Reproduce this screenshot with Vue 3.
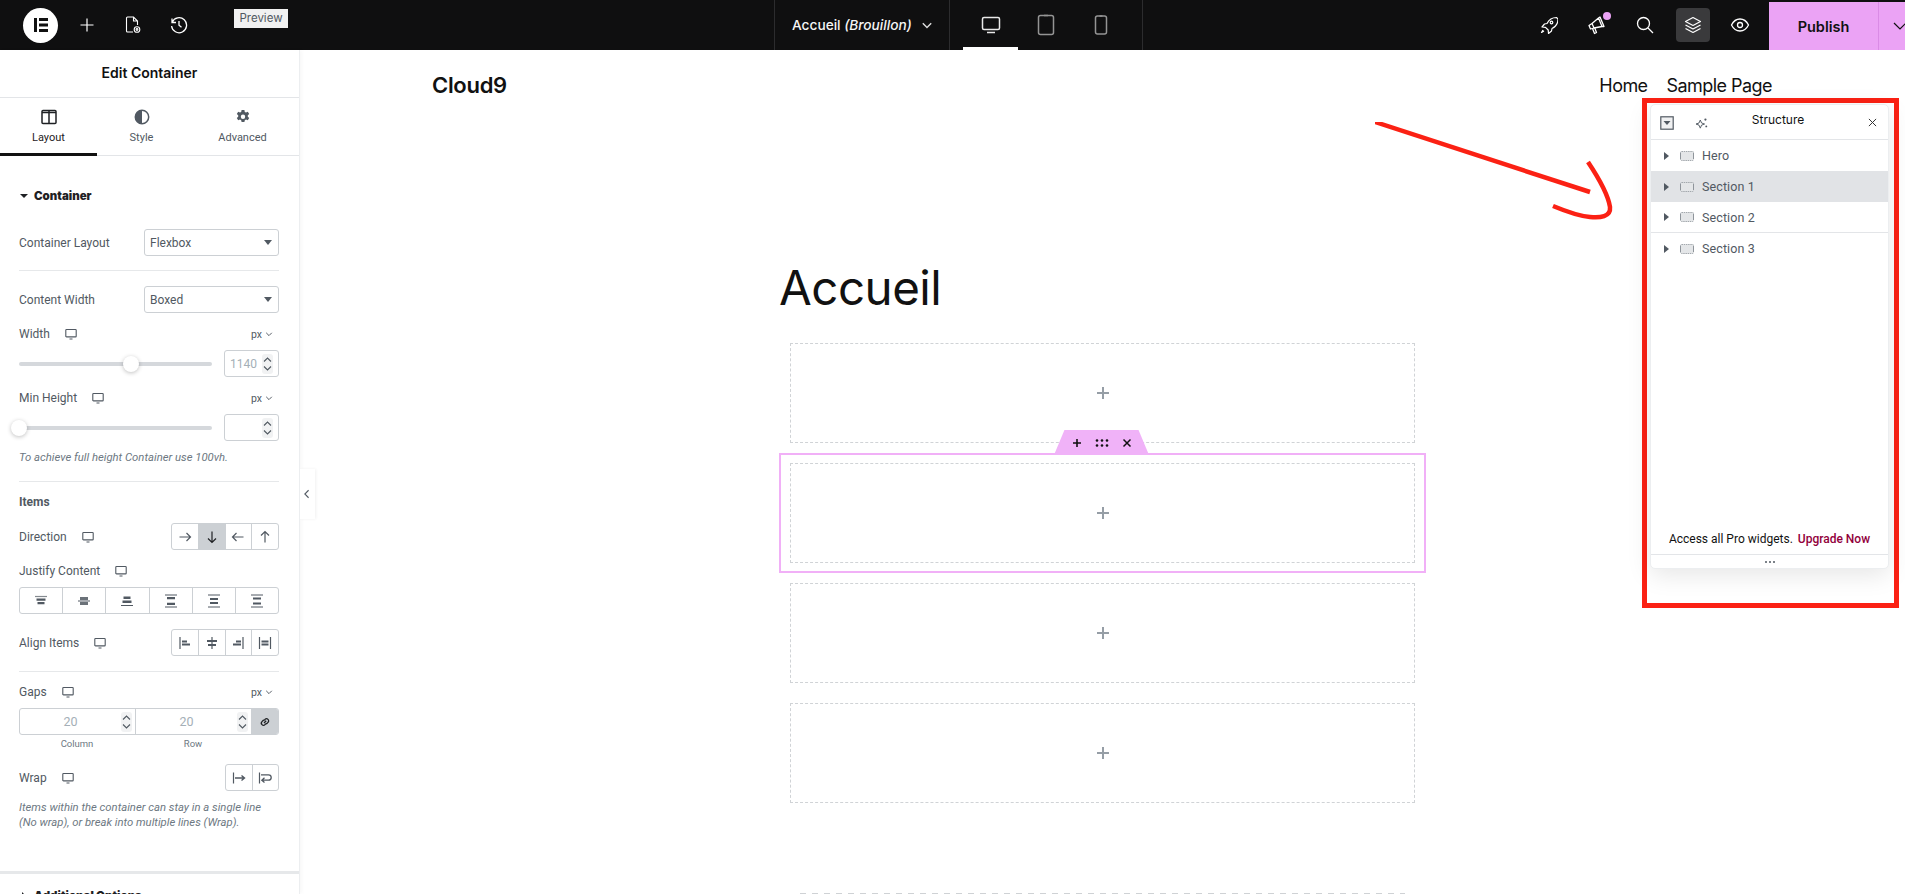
<script setup>
const directions = ['arrow-right', 'arrow-down', 'arrow-left', 'arrow-up']
const justify = ['j1', 'j2', 'j3', 'j4', 'j5', 'j6']
const aligns = ['a1', 'a2', 'a3', 'a4']
const wraps = ['w1', 'w2']
const tree = ['Hero', 'Section 1', 'Section 2', 'Section 3']
const blocks = [0, 1, 2, 3]
</script>

<template>
  <div class="app">
    <svg class="defs" width="0" height="0" aria-hidden="true">
      <symbol id="monitor" viewBox="0 0 12 12"><path d="M1.5 1.5h9a.7.7 0 0 1 .7.7v6a.7.7 0 0 1-.7.7h-9a.7.7 0 0 1-.7-.7v-6a.7.7 0 0 1 .7-.7zM4.5 11h3" fill="none" stroke="currentColor" stroke-width="1.1"/></symbol>
      <symbol id="chev" viewBox="0 0 10 10"><path d="M1.5 3.5 5 7l3.5-3.5" fill="none" stroke="currentColor" stroke-width="1.2"/></symbol>
      <symbol id="spin" viewBox="0 0 11 20"><path d="M2 7.5 5.5 4 9 7.5M2 12.5 5.5 16 9 12.5" fill="none" stroke="currentColor" stroke-width="1.1"/></symbol>
      <symbol id="arrow-right" viewBox="0 0 14 14"><path d="M1.5 7h11M8.5 3l4 4-4 4" fill="none" stroke="currentColor" stroke-width="1.2"/></symbol>
      <symbol id="arrow-down" viewBox="0 0 14 14"><path d="M7 1.5v11M3 8.5l4 4 4-4" fill="none" stroke="currentColor" stroke-width="1.2"/></symbol>
      <symbol id="arrow-left" viewBox="0 0 14 14"><path d="M12.5 7h-11M5.5 3l-4 4 4 4" fill="none" stroke="currentColor" stroke-width="1.2"/></symbol>
      <symbol id="arrow-up" viewBox="0 0 14 14"><path d="M7 12.5v-11M3 5.5l4-4 4 4" fill="none" stroke="currentColor" stroke-width="1.2"/></symbol>
      <symbol id="j1" viewBox="0 0 14 14"><path d="M1 2.5h12" stroke="currentColor" stroke-width="1.2" opacity=".7"/><path d="M2.5 4.5h9v2.3h-9zM3.500 8h7v2.300h-7z" fill="currentColor"/></symbol>
      <symbol id="j2" viewBox="0 0 14 14"><path d="M1 7h12" stroke="currentColor" stroke-width="1"/><path d="M3 3h8v3H3zM3 8h8v3H3z" fill="currentColor" opacity=".85"/></symbol>
      <symbol id="j3" viewBox="0 0 14 14"><path d="M1 11.500h12" stroke="currentColor" stroke-width="1.2"/><path d="M3.500 2.500h7v2.500h-7zM2.500 6.500h9V9h-9z" fill="currentColor"/></symbol>
      <symbol id="j4" viewBox="0 0 14 14"><path d="M1 1h12M1 13h12" stroke="currentColor" stroke-width="1.1"/><path d="M3 3h8v2.300H3zM3 8.700h8V11H3z" fill="currentColor"/></symbol>
      <symbol id="j5" viewBox="0 0 14 14"><path d="M1 1h12M1 13h12" stroke="currentColor" stroke-width="1"/><path d="M3 4h8v2H3zM3 8h8v2H3z" fill="currentColor"/></symbol>
      <symbol id="j6" viewBox="0 0 14 14"><path d="M1 1h12M1 13h12" stroke="currentColor" stroke-width="1"/><path d="M3 3.500h8v2H3zM3 8.500h8v2H3z" fill="currentColor"/></symbol>
      <symbol id="a1" viewBox="0 0 14 14"><path d="M2 1v12" stroke="currentColor" stroke-width="1.2"/><path d="M4 4.500h5v2H4zM4 7.500h8v2H4z" fill="currentColor"/></symbol>
      <symbol id="a2" viewBox="0 0 14 14"><path d="M7 1v12" stroke="currentColor" stroke-width="1.2"/><path d="M2 4h10v2H2zM3 8h8v2H3z" fill="currentColor"/></symbol>
      <symbol id="a3" viewBox="0 0 14 14"><path d="M12 1v12" stroke="currentColor" stroke-width="1.2"/><path d="M5 4.500h5v2H5zM2 7.500h8v2H2z" fill="currentColor"/></symbol>
      <symbol id="a4" viewBox="0 0 14 14"><path d="M1.500 1v12M12.500 1v12" stroke="currentColor" stroke-width="1.2"/><path d="M3.500 4.500h7v2h-7zM3.500 7.500h7v2h-7z" fill="currentColor"/></symbol>
      <symbol id="w1" viewBox="0 0 14 14"><path d="M1.500 1.500v11" stroke="currentColor" stroke-width="1.2"/><path d="M3 7h9M9.500 4.500 12.500 7l-3 2.500" fill="none" stroke="currentColor" stroke-width="1.4"/></symbol>
      <symbol id="w2" viewBox="0 0 14 14"><path d="M1.500 1.500v11" stroke="currentColor" stroke-width="1.2"/><path d="M3 3.800h7.500a2.600 2.600 0 0 1 0 5.400H4M6.500 6.800 3.800 9.200l2.700 2.400" fill="none" stroke="currentColor" stroke-width="1.3"/></symbol>
      <symbol id="section" viewBox="0 0 14 10"><rect x="0.500" y="0.500" width="13" height="9" rx="1" fill="#e4e6e8" stroke="#a3a8ad" stroke-dasharray="1.5 .7"/><path d="M.5 2v6M13.500 2v6" stroke="#8f959b" stroke-width="1"/></symbol>
      <symbol id="plus" viewBox="0 0 14 14"><path d="M7 1v12M1 7h12" fill="none" stroke="currentColor" stroke-width="2"/></symbol>
    </svg>

    <header class="topbar">
      <div class="left-tools">
        <span class="logo">
          <svg viewBox="0 0 20 20" width="20" height="20"><path d="M3 3h3v14H3zM8 3h9v3H8zM8 8.500h9v3H8zM8 14h9v3H8z" fill="#111"/></svg>
        </span>
        <button class="tool">
          <svg viewBox="0 0 16 16" width="16" height="16"><path d="M8 1.500v13M1.500 8h13" fill="none" stroke="#fff" stroke-width="1.2"/></svg>
        </button>
        <button class="tool">
          <svg viewBox="0 0 18 18" width="18" height="18" fill="none" stroke="#fff" stroke-width="1.1"><path d="M9 16H3.500a1 1 0 0 1-1-1V2a1 1 0 0 1 1-1h6l4 4v4M9.500 1v4h4"/><circle cx="13" cy="13.500" r="2.800"/><circle cx="13" cy="13.500" r=".9"/></svg>
        </button>
        <button class="tool">
          <svg viewBox="0 0 18 18" width="18" height="18" fill="none" stroke="#fff" stroke-width="1.3"><path d="M2.200 6.200A7.500 7.500 0 1 1 1.600 10M2 2.500v4h4"/><path d="M9 5v4.300l2.500 2"/></svg>
        </button>
      </div>

      <div class="doc-title">
        <span>Accueil <em>(Brouillon)</em></span>
        <svg class="doc-chev"><use href="#chev"/></svg>
      </div>

      <div class="devices">
        <button class="device active">
          <svg viewBox="0 0 20 20" width="20" height="20" fill="none" stroke="#e8e8e8" stroke-width="1.5"><rect x="1.500" y="2.500" width="17" height="12" rx="1.500"/><path d="M6 17.500h8"/></svg>
        </button>
        <button class="device">
          <svg viewBox="0 0 18 22" width="18" height="22" fill="none" stroke="#949494" stroke-width="1.5"><rect x="1.500" y="1.500" width="15" height="19" rx="2"/><path d="M7 1.500h4"/></svg>
        </button>
        <button class="device">
          <svg viewBox="0 0 14 20" width="14" height="20" fill="none" stroke="#949494" stroke-width="1.5"><rect x="1.500" y="1" width="11" height="18" rx="2"/><path d="M5.500 1h3"/></svg>
        </button>
      </div>

      <div class="right-tools">
        <button class="tool r">
          <svg viewBox="0 0 18 18" width="18" height="18" fill="none" stroke="#fff" stroke-width="1.2" stroke-linejoin="round"><path d="M16.500 1.500c-4 0-7.500 2-9.500 6l-2.500.5-2.500 3 3.500.3 2.700 2.700.3 3.500 3-2.500.5-2.500c4-2 6-5.500 6-9.500z"/><circle cx="11.500" cy="6.500" r="1.300"/><path d="M3 14l-1.500 2.500L4 15"/></svg>
        </button>
        <button class="tool r mega">
          <svg viewBox="0 0 20 20" width="20" height="20" fill="none" stroke="#fff" stroke-width="1.3" stroke-linejoin="round"><path d="M5 8.500 11.500 3l3.500 8.500-8 1.500zM5 8.500 2 10.500l1.500 3.500 3.500-1zM11.500 3l1.500-1 4 9.500-2 0M5.500 13.500l2 5 2-1-1.800-4.500"/></svg>
          <i class="dot"></i>
        </button>
        <button class="tool r">
          <svg viewBox="0 0 18 18" width="18" height="18" fill="none" stroke="#fff" stroke-width="1.3"><circle cx="7.500" cy="7.500" r="6"/><path d="m12 12 5 5"/></svg>
        </button>
        <button class="tool r2">
          <span class="layers">
            <svg viewBox="0 0 18 18" width="18" height="18" fill="none" stroke="#fff" stroke-width="1.2" stroke-linejoin="round"><path d="M9 1.500 16.500 5.500 9 9.500 1.500 5.500zM1.500 9 9 13l7.500-4M1.500 12.500 9 16.500l7.500-4"/></svg>
          </span>
        </button>
        <button class="tool r2">
          <svg viewBox="0 0 20 16" width="20" height="16" fill="none" stroke="#fff" stroke-width="1.3"><path d="M1.500 8C3.500 4 6.500 2 10 2s6.500 2 8.500 6c-2 4-5 6-8.500 6S3.500 12 1.500 8z"/><circle cx="10" cy="8" r="2.500"/></svg>
        </button>
        <div class="publish">
          <span class="publish-main">Publish</span>
          <span class="publish-more"><svg viewBox="0 0 14 14" width="14" height="14"><path d="M1 4l6 6 6-6" fill="none" stroke="#111" stroke-width="1.2"/></svg></span>
        </div>
      </div>
      <span class="tooltip">Preview</span>
    </header>

    <div class="main">
      <aside class="panel">
        <h1 class="panel-title">Edit Container</h1>
        <nav class="tabs">
          <div class="tab active">
            <svg viewBox="0 0 16 16" width="16" height="16" fill="none" stroke="#1f2124" stroke-width="1.5"><rect x="1" y="1.500" width="14" height="13" rx="1"/><path d="M8 2v12M1 3.500h14" /></svg>
            <span>Layout</span>
          </div>
          <div class="tab">
            <svg viewBox="0 0 16 16" width="16" height="16"><circle cx="8" cy="8" r="6.700" fill="none" stroke="#515962" stroke-width="1.5"/><path d="M8 1.300a6.700 6.700 0 0 0 0 13.400z" fill="#515962"/></svg>
            <span>Style</span>
          </div>
          <div class="tab">
            <svg viewBox="0 0 16 16" width="16" height="16"><path fill-rule="evenodd" d="M6.600 1h2.800l.4 1.900 1.200.6 1.800-.8 1.400 2.300-1.400 1.300v1.400l1.400 1.300-1.400 2.300-1.800-.8-1.200.7-.4 1.800H6.600l-.4-1.800-1.200-.7-1.800.8-1.400-2.300 1.400-1.300V6.300L1.800 5l1.400-2.300 1.800.8 1.200-.6zM8 5.500a2.200 2.200 0 1 0 0 4.400 2.200 2.200 0 0 0 0-4.400z" fill="#515962"/></svg>
            <span>Advanced</span>
          </div>
        </nav>

        <div class="panel-body">
          <div class="sec-head m30">
            <i class="caret"></i><strong>Container</strong>
          </div>

          <div class="ctl m23">
            <span class="lab">Container Layout</span>
            <div class="select"><span>Flexbox</span><i class="caret grey"></i></div>
          </div>
          <hr class="rule m14" />
          <div class="ctl m15">
            <span class="lab">Content Width</span>
            <div class="select"><span>Boxed</span><i class="caret grey"></i></div>
          </div>

          <div class="lab-row m13">
            <span class="lab">Width</span>
            <svg class="mon"><use href="#monitor"/></svg>
            <span class="unit">px<svg class="unit-chev"><use href="#chev"/></svg></span>
          </div>
          <div class="slider-row m8">
            <div class="track"><i class="thumb thumb-mid"></i></div>
            <div class="num"><span class="num-val">1140</span><svg class="spin"><use href="#spin"/></svg></div>
          </div>

          <div class="lab-row m13">
            <span class="lab">Min Height</span>
            <svg class="mon"><use href="#monitor"/></svg>
            <span class="unit">px<svg class="unit-chev"><use href="#chev"/></svg></span>
          </div>
          <div class="slider-row m8">
            <div class="track"><i class="thumb thumb-start"></i></div>
            <div class="num"><span class="num-val"></span><svg class="spin"><use href="#spin"/></svg></div>
          </div>

          <p class="hint m9">To achieve full height Container use 100vh.</p>
          <hr class="rule m16" />
          <div class="sub-head m12">Items</div>

          <div class="ctl m13">
            <div class="lab-wrap"><span class="lab">Direction</span><svg class="mon"><use href="#monitor"/></svg></div>
            <div class="group w108">
              <span v-for="d in directions" :key="d" class="cell" :class="{ on: d === 'arrow-down' }"><svg class="ico"><use :href="'#' + d"/></svg></span>
            </div>
          </div>

          <div class="lab-row m13">
            <span class="lab">Justify Content</span>
            <svg class="mon"><use href="#monitor"/></svg>
          </div>
          <div class="group wfull m8">
            <span v-for="j in justify" :key="j" class="cell"><svg class="ico"><use :href="'#' + j"/></svg></span>
          </div>

          <div class="ctl m15">
            <div class="lab-wrap"><span class="lab">Align Items</span><svg class="mon"><use href="#monitor"/></svg></div>
            <div class="group w108">
              <span v-for="a in aligns" :key="a" class="cell"><svg class="ico"><use :href="'#' + a"/></svg></span>
            </div>
          </div>
          <hr class="rule m15" />

          <div class="lab-row m12">
            <span class="lab">Gaps</span>
            <svg class="mon"><use href="#monitor"/></svg>
            <span class="unit">px<svg class="unit-chev"><use href="#chev"/></svg></span>
          </div>
          <div class="gaps m8">
            <div class="gap-cell"><span class="gap-val">20</span><svg class="spin"><use href="#spin"/></svg></div>
            <div class="gap-cell"><span class="gap-val">20</span><svg class="spin"><use href="#spin"/></svg></div>
            <div class="gap-link">
              <svg viewBox="0 0 12 12" width="12" height="12" fill="none" stroke="#1f2124" stroke-width="1.3"><path d="M5 7 7.200 4.800M4.600 4 3 5.600a2 2 0 0 0 3 3L7.400 7.500M7.400 8 9 6.400a2 2 0 0 0-3-3L4.600 4.500"/></svg>
            </div>
          </div>
          <div class="gap-labels m2"><span>Column</span><span>Row</span></div>

          <div class="ctl m13">
            <div class="lab-wrap"><span class="lab">Wrap</span><svg class="mon"><use href="#monitor"/></svg></div>
            <div class="group w54">
              <span v-for="w in wraps" :key="w" class="cell"><svg class="ico"><use :href="'#' + w"/></svg></span>
            </div>
          </div>
          <p class="hint m9">Items within the container can stay in a single line<br />(No wrap), or break into multiple lines (Wrap).</p>
        </div>

        <div class="thick-rule"></div>
        <div class="sec-head m12">
          <i class="caret side"></i><strong>Additional Options</strong>
        </div>
      </aside>

      <main class="canvas">
        <button class="collapse">
          <svg viewBox="0 0 8 12" width="7" height="10"><path d="M6.500 1.500 2 6l4.500 4.500" fill="none" stroke="#515962" stroke-width="1.3"/></svg>
        </button>

        <div class="site-head">
          <span class="site-logo">Cloud9</span>
          <nav class="site-nav"><a>Home</a><a>Sample Page</a></nav>
        </div>

        <div class="page">
          <h2 class="page-title">Accueil</h2>
          <section v-for="b in blocks" :key="b" class="sect" :class="{ selected: b === 1 }">
            <div v-if="b === 1" class="handle">
              <svg viewBox="0 0 10 10" width="10" height="10"><path d="M5 1v8M1 5h8" stroke="#111" stroke-width="1.6"/></svg>
              <svg viewBox="0 0 14 10" width="14" height="10" fill="#111"><circle cx="2" cy="2.500" r="1.300"/><circle cx="7" cy="2.500" r="1.300"/><circle cx="12" cy="2.500" r="1.300"/><circle cx="2" cy="7.500" r="1.300"/><circle cx="7" cy="7.500" r="1.300"/><circle cx="12" cy="7.500" r="1.300"/></svg>
              <svg viewBox="0 0 10 10" width="10" height="10"><path d="m1.500 1.500 7 7M8.500 1.500l-7 7" stroke="#111" stroke-width="1.5"/></svg>
            </div>
            <div class="drop"><svg class="drop-plus"><use href="#plus"/></svg></div>
          </section>
          <div class="next-dash"></div>
        </div>

        <svg class="scribble" width="260" height="110" viewBox="0 0 260 110" fill="none" stroke="#fb2114" stroke-width="4.5">
          <path d="M0 0 215 70"/>
          <path d="M213 40C225 58 233 72 235 85C236 95 225 96 215 95C203 94 190 89 178 84"/>
        </svg>

        <div class="red-box"></div>

        <div class="structure">
          <div class="st-head">
            <svg class="st-ic" viewBox="0 0 14 14" width="14" height="14"><rect x=".8" y=".8" width="12.400" height="12.400" fill="#f0f1f2" stroke="#515962" stroke-width="1.2"/><path d="M3.500 5h7L7 9z" fill="#515962"/></svg>
            <svg class="st-ai" viewBox="0 0 14 14" width="12" height="12" fill="#515962"><path d="M5 3.500 6.500 7 10 8.200 6.500 9.500 5 13 3.500 9.500 0 8.200 3.500 7z" fill="none" stroke="#515962" stroke-width="1.1"/><circle cx="11" cy="3" r="1.300"/><circle cx="12" cy="11" r="1.100"/></svg>
            <span class="st-title">Structure</span>
            <svg class="st-close" viewBox="0 0 10 10" width="9" height="9"><path d="m1 1 8 8M9 1 1 9" stroke="#333" stroke-width="1.1"/></svg>
          </div>
          <div v-for="(t, i) in tree" :key="t" class="st-row" :class="{ hot: i === 1, lined: i === 2 }">
            <i class="st-caret"></i>
            <svg class="st-sec"><use href="#section"/></svg>
            <span>{{ t }}</span>
          </div>
          <div class="st-spacer"></div>
          <div class="st-promo">Access all Pro widgets. <b>Upgrade Now</b></div>
          <div class="st-foot"><i></i><i></i><i></i></div>
        </div>
      </main>
    </div>
  </div>
</template>

<style>
html, body { margin: 0; background: #fff; }
</style>

<style scoped>
.app { position: relative; width: 1905px; height: 894px; overflow: hidden; display: flex; flex-direction: column; font-family: Roboto, "Liberation Sans", sans-serif; color: #515962; }
.defs { position: absolute; }
button { background: none; border: 0; padding: 0; display: flex; align-items: center; justify-content: center; color: inherit; }

.topbar { position: relative; flex: 0 0 50px; height: 50px; background: #0f0f10; display: flex; align-items: stretch; color: #fff; }
.left-tools { display: flex; align-items: center; padding-left: 23px; width: 751px; flex: none; }
.logo { width: 35px; height: 35px; border-radius: 50%; background: #fff; display: flex; align-items: center; justify-content: center; margin-right: 6px; }
.tool { width: 46px; height: 50px; flex: none; }
.tooltip { position: absolute; left: 234px; top: 9px; width: 54px; height: 19px; background: #f1f1f1; color: #515962; font: 400 11.5px/19px Inter, sans-serif; text-align: center; }
.doc-title { width: 175px; flex: none; display: flex; align-items: center; padding-left: 17px; box-sizing: border-box; border-left: 1px solid #2c2c2e; font: 500 13.7px Inter, sans-serif; color: #f5f5f5; white-space: nowrap; }
.doc-title em { font-style: italic; }
.doc-chev { width: 12px; height: 12px; margin-left: 9px; color: #ddd; }
.devices { display: flex; flex: none; padding: 0 13px; width: 194px; box-sizing: border-box; border-left: 1px solid #2c2c2e; border-right: 1px solid #2c2c2e; }
.device { width: 56px; height: 50px; position: relative; }
.device.active::after { content: ""; position: absolute; left: 0; right: 0; bottom: 0; height: 3px; background: #fff; }
.right-tools { margin-left: auto; display: flex; align-items: center; flex: none; width: 395px; margin-right: -15px; }
.tool.r { width: 48px; }
.tool.r2 { width: 47px; }
.mega { position: relative; }
.dot { position: absolute; left: 30px; top: 12px; width: 8px; height: 8px; border-radius: 50%; background: #eba3f5; }
.layers { width: 34px; height: 34px; border-radius: 4px; background: #3a3a3c; display: flex; align-items: center; justify-content: center; }
.publish { margin-left: 6px; align-self: flex-end; height: 48px; width: 151px; flex: none; display: flex; background: #eba3f5; color: #111; font: 600 14.5px Inter, sans-serif; }
.publish-main { width: 109px; display: flex; align-items: center; justify-content: center; border-right: 1px solid #da8be6; }
.publish-more { flex: 1; display: flex; align-items: center; padding-left: 14px; }

.main { flex: 1; display: flex; min-height: 0; }
.panel { width: 300px; flex: none; box-sizing: border-box; border-right: 1px solid #eceef0; box-shadow: 2px 0 4px rgba(0, 0, 0, .03); overflow: hidden; background: #fff; font-size: 12px; position: relative; z-index: 1; }
.panel-title { margin: 0; height: 48px; box-sizing: border-box; text-align: center; font: 600 14px/45px Inter, sans-serif; color: #111; border-bottom: 1px solid #e3e5e8; }
.tabs { display: flex; height: 58px; border-bottom: 1px solid #e3e5e8; box-sizing: border-box; }
.tab { position: relative; width: 97px; flex: none; display: flex; flex-direction: column; align-items: center; padding-top: 11px; gap: 6px; font-size: 11px; line-height: 14px; box-sizing: border-box; color: #515962; }
.tab:nth-child(2) { width: 89px; }
.tab:nth-child(3) { width: 113px; }
.tab.active { color: #1f2124; }
.tab.active::after { content: ""; position: absolute; left: 0; right: 0; bottom: -1px; height: 3px; background: #111; }
.panel-body { padding: 0 20px 0 19px; }

.m2 { margin-top: 2px; } .m8 { margin-top: 8px; } .m9 { margin-top: 9px; } .m10 { margin-top: 10px; }
.m12 { margin-top: 12px; } .m13 { margin-top: 13px; } .m14 { margin-top: 14px; } .m15 { margin-top: 15px; }
.m16 { margin-top: 16px; } .m23 { margin-top: 23px; } .m30 { margin-top: 30px; }

.sec-head { display: flex; align-items: center; height: 20px; gap: 6px; padding-left: 1px; color: #1f2124; font: 700 11.5px Inter, Roboto, sans-serif; }
.panel > .sec-head { padding-left: 20px; }
.caret { width: 0; height: 0; border-left: 4px solid transparent; border-right: 4px solid transparent; border-top: 4px solid #1f2124; }
.caret.side { transform: rotate(-90deg); }
.caret.grey { border-top-color: #515962; border-left-width: 4.5px; border-right-width: 4.5px; border-top-width: 5px; }
.ctl { height: 27px; display: flex; align-items: center; justify-content: space-between; }
.lab { color: #515962; font-size: 12px; white-space: nowrap; }
.lab-wrap { display: flex; align-items: center; }
.select { width: 135px; height: 27px; box-sizing: border-box; border: 1px solid #ccd0d4; border-radius: 3px; padding: 0 6px 0 5px; display: flex; align-items: center; justify-content: space-between; color: #515962; }
.rule { border: 0; height: 1px; background: #e6e8ea; margin-bottom: 0; margin-left: 0; margin-right: 0; }
.lab-row { height: 16px; display: flex; align-items: center; }
.mon { width: 12px; height: 12px; margin-left: 15px; color: #515962; flex: none; }
.unit { margin-left: auto; margin-right: 6px; display: flex; align-items: center; font-size: 10.5px; color: #515962; }
.unit-chev { width: 8px; height: 8px; margin-left: 3px; color: #515962; }
.slider-row { height: 27px; display: flex; align-items: center; justify-content: space-between; }
.track { position: relative; width: 193px; height: 4px; border-radius: 2px; background: #d5d8dc; }
.thumb { position: absolute; top: -6px; width: 16px; height: 16px; border-radius: 50%; background: #fff; box-shadow: 0 1px 4px rgba(0, 0, 0, .25); }
.thumb-mid { left: 104px; }
.thumb-start { left: -8px; }
.num { width: 55px; height: 27px; box-sizing: border-box; border: 1px solid #ccd0d4; border-radius: 3px; display: flex; align-items: center; justify-content: flex-end; padding-right: 5px; gap: 5px; color: #a4afb7; font-size: 12px; }
.spin { width: 11px; height: 20px; background: #f1f2f3; border-radius: 3px; color: #515962; flex: none; }
.hint { margin-bottom: 0; margin-left: 0; margin-right: 0; font-style: italic; font-size: 11.3px; line-height: 15px; color: #6d7882; white-space: nowrap; }
.sub-head { height: 16px; line-height: 16px; font-weight: 700; font-size: 12px; color: #515962; }
.group { display: flex; height: 27px; box-sizing: border-box; border: 1px solid #ccd0d4; border-radius: 3px; overflow: hidden; }
.w108 { width: 108px; } .w54 { width: 54px; } .wfull { width: 260px; }
.cell { flex: 1; display: flex; align-items: center; justify-content: center; color: #515962; border-left: 1px solid #ccd0d4; }
.cell:first-child { border-left: 0; }
.cell.on { background: #ccd0d4; color: #1f2124; }
.ico { width: 14px; height: 14px; }
.gaps { display: flex; height: 27px; box-sizing: border-box; border: 1px solid #ccd0d4; border-radius: 3px; overflow: hidden; }
.gap-cell { width: 116px; flex: none; display: flex; align-items: center; padding-right: 3px; box-sizing: border-box; border-right: 1px solid #ccd0d4; color: #a4afb7; font-size: 12.5px; }
.gap-val { flex: 1; text-align: center; }
.gap-link { flex: 1; background: #ccd0d4; display: flex; align-items: center; justify-content: center; }
.gap-labels { height: 14px; display: flex; font-size: 9.5px; line-height: 14px; color: #6d7882; }
.gap-labels span { width: 116px; text-align: center; }
.thick-rule { height: 3px; background: #e6e8ea; margin-top: 41px; }

.canvas { position: relative; flex: 1; min-width: 0; overflow: hidden; background: #fff; }
.collapse { position: absolute; left: 0; top: 419px; width: 15px; height: 50px; padding-right: 2px; background: #fff; box-shadow: 1px 0 3px rgba(0, 0, 0, .06); z-index: 2; }
.site-head { width: 1341px; height: 70px; margin: 0 auto; display: flex; align-items: center; justify-content: space-between; color: #111; }
.site-logo { font: 600 22px Inter, sans-serif; letter-spacing: -.3px; }
.site-nav { display: flex; gap: 19px; margin-right: 1px; font: 400 18px Inter, sans-serif; letter-spacing: -.55px; }
.page { width: 645px; margin: 0 auto; }
.page-title { margin: 128px 0 0 -1px; height: 85px; font: 400 47.5px/80px Inter, sans-serif; color: #111; letter-spacing: -.5px; }
.sect { position: relative; box-sizing: border-box; height: 120px; border: 2px solid transparent; padding: 8px; }
.sect.selected { border-color: #f1b0f7; margin: 0 -1px; padding: 8px 9px; }
.handle { position: absolute; left: 273px; top: -25px; width: 95px; height: 25px; background: #f0b2f8; clip-path: polygon(0 100%, 11% 0, 89% 0, 100% 100%); display: flex; align-items: center; justify-content: center; gap: 13px; }
.drop { box-sizing: border-box; height: 100px; border: 1px dashed #d0d3d6; display: flex; align-items: center; justify-content: center; }
.drop-plus { width: 14px; height: 14px; color: #969ea6; }
.next-dash { margin: 80px 0 0 20px; width: 605px; height: 1px; background: repeating-linear-gradient(90deg, #cfd2d5 0 6px, transparent 6px 12px); }

.scribble { position: absolute; left: 1075px; top: 72px; }
.red-box { position: absolute; left: 1342px; top: 48px; width: 257px; height: 510px; box-sizing: border-box; border: 5px solid #fb2114; }
.structure { position: absolute; left: 1350px; top: 54px; width: 239px; height: 465px; box-sizing: border-box; background: #fff; border: 1px solid #eceef0; border-radius: 5px; box-shadow: 0 6px 24px rgba(0, 0, 0, .10); display: flex; flex-direction: column; }
.st-head { position: relative; height: 35px; flex: none; box-sizing: border-box; border-bottom: 1px solid #e3e5e8; display: flex; align-items: center; }
.st-ic { position: absolute; left: 9px; top: 11px; }
.st-ai { position: absolute; left: 45px; top: 12px; }
.st-title { flex: 1; text-align: center; font: 400 12px Inter, Roboto, sans-serif; color: #111; margin-top: -6px; padding-left: 17px; }
.st-close { position: absolute; right: 11px; top: 13px; }
.st-row { height: 31px; flex: none; box-sizing: border-box; display: flex; align-items: center; font: 400 12.5px Roboto, sans-serif; color: #515962; padding-left: 13px; letter-spacing: .1px; }
.st-row.hot { background: #e1e3e6; }
.st-row.lined { border-bottom: 1px solid #e3e5e8; }
.st-caret { width: 0; height: 0; border-top: 4px solid transparent; border-bottom: 4px solid transparent; border-left: 5px solid #515962; }
.st-sec { width: 14px; height: 10px; margin-left: 11px; margin-right: 8px; }
.st-spacer { flex: 1; }
.st-promo { flex: none; text-align: center; font: 400 12px/16px Roboto, sans-serif; color: #111; margin-bottom: 7px; white-space: nowrap; }
.st-promo b { font-weight: 500; color: #92003b; margin-left: 2px; }
.st-foot { flex: none; height: 13px; border-top: 1px solid #e3e5e8; display: flex; align-items: center; justify-content: center; gap: 2px; }
.st-foot i { width: 2px; height: 2px; border-radius: 50%; background: #515962; }
</style>
